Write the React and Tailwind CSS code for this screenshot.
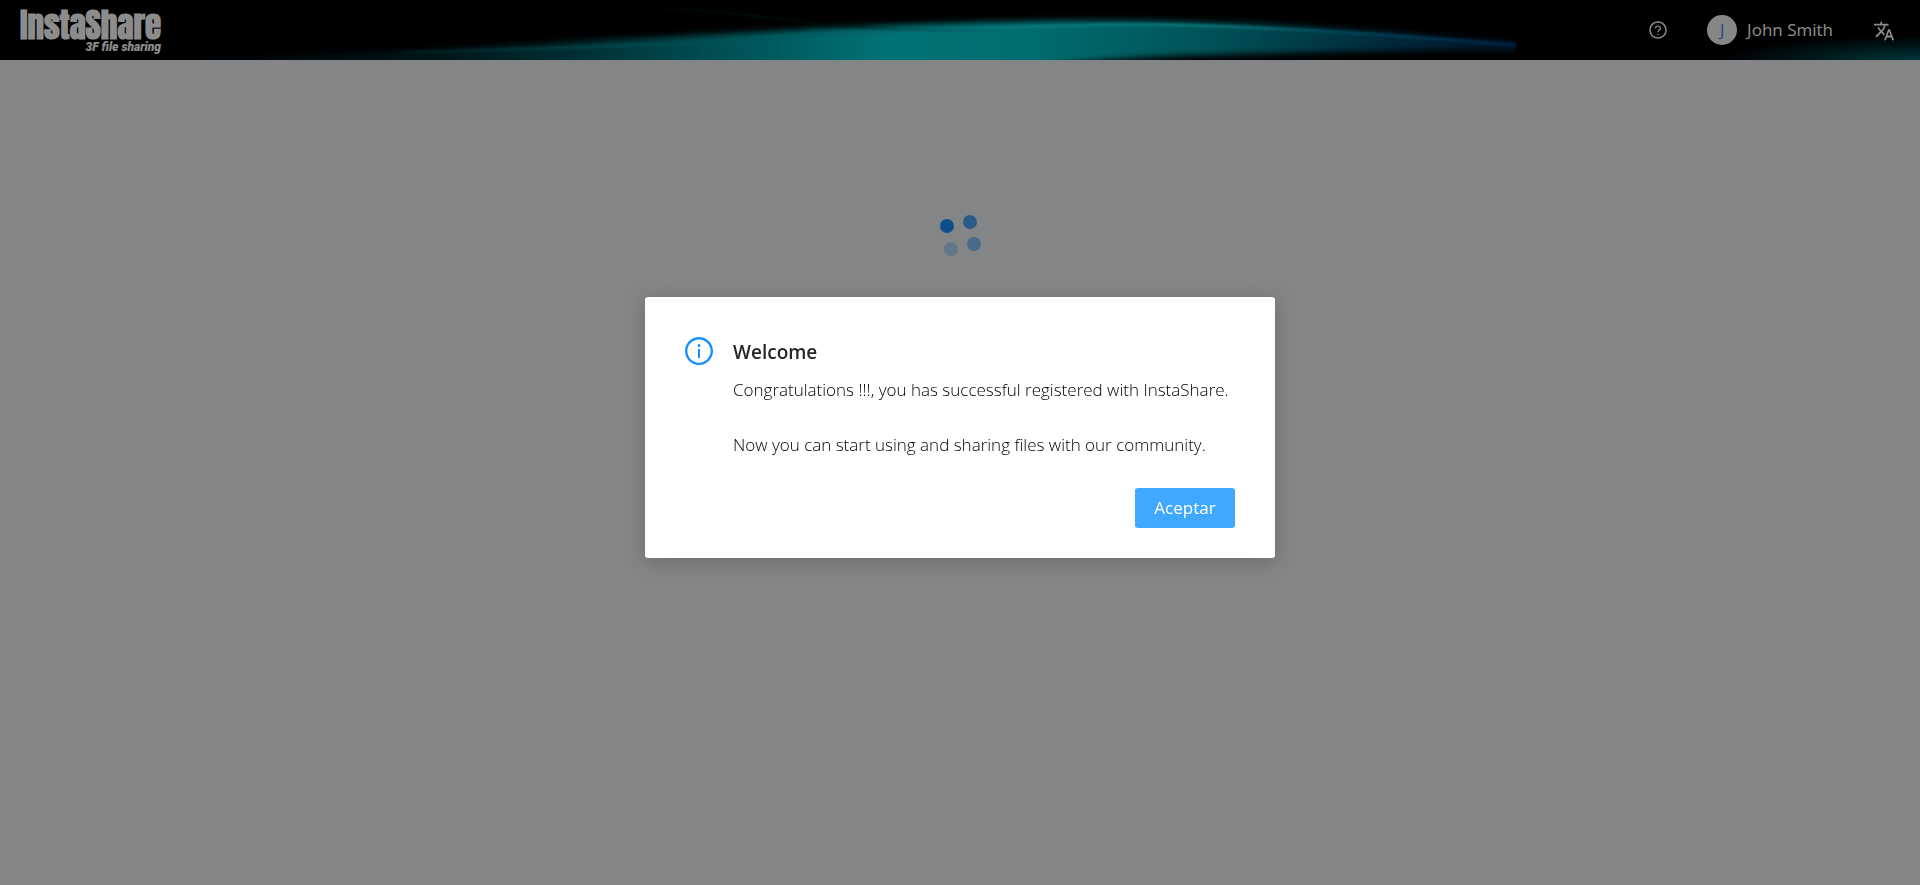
import React from 'react';
import { AiOutlineQuestionCircle, AiOutlineInfoCircle } from 'react-icons/ai';
import { MdTranslate } from 'react-icons/md';

function HeaderWaves() {
  return (
    <svg
      className="absolute inset-0 h-full w-full"
      viewBox="0 0 1920 60"
      preserveAspectRatio="none"
      aria-hidden="true"
    >
      <defs>
        <linearGradient id="beam" gradientUnits="userSpaceOnUse" x1="200" y1="0" x2="1520" y2="0">
          <stop offset="0" stopColor="#00262e" stopOpacity="0.3" />
          <stop offset="0.18" stopColor="#003a42" stopOpacity="0.7" />
          <stop offset="0.36" stopColor="#008088" />
          <stop offset="0.52" stopColor="#00d0d6" />
          <stop offset="0.62" stopColor="#00c8cc" />
          <stop offset="0.75" stopColor="#009ea4" />
          <stop offset="0.86" stopColor="#006078" />
          <stop offset="0.95" stopColor="#003458" />
          <stop offset="1" stopColor="#002a4c" />
        </linearGradient>
        <linearGradient id="edge" gradientUnits="userSpaceOnUse" x1="300" y1="0" x2="1520" y2="0">
          <stop offset="0" stopColor="#005a60" stopOpacity="0" />
          <stop offset="0.3" stopColor="#008a90" />
          <stop offset="0.6" stopColor="#10dce8" />
          <stop offset="0.75" stopColor="#10d0d4" />
          <stop offset="0.86" stopColor="#0080a0" />
          <stop offset="1" stopColor="#003c80" />
        </linearGradient>
        <linearGradient id="fold" gradientUnits="userSpaceOnUse" x1="600" y1="0" x2="1000" y2="0">
          <stop offset="0" stopColor="#001c20" stopOpacity="0" />
          <stop offset="0.4" stopColor="#001c20" />
          <stop offset="1" stopColor="#001c20" stopOpacity="0" />
        </linearGradient>
        <radialGradient id="corner">
          <stop offset="0" stopColor="#006068" />
          <stop offset="1" stopColor="#006068" stopOpacity="0" />
        </radialGradient>
        <filter id="soft" x="-5%" y="-40%" width="110%" height="180%">
          <feGaussianBlur stdDeviation="5 3" />
        </filter>
        <filter id="thin" x="-5%" y="-100%" width="110%" height="300%">
          <feGaussianBlur stdDeviation="4 1" />
        </filter>
        <clipPath id="tip">
          <rect x="0" y="0" width="1516" height="60" />
        </clipPath>
      </defs>
      <rect width="1920" height="60" fill="#000102" />
      <g clipPath="url(#tip)">
        <path
          d="M200 58C400 54 520 44 700 35C820 29 900 24 1000 22C1100 19 1200 21 1290 26C1380 31 1460 38 1530 44V50C1440 49 1340 52 1200 55C1100 58 1060 64 980 74H200Z"
          fill="url(#beam)"
          filter="url(#soft)"
        />
        <path
          d="M400 52C560 49 700 43 780 38C860 33 940 28 1100 25C1180 24 1240 27 1300 30C1380 34 1460 41 1530 46"
          fill="none"
          stroke="url(#edge)"
          strokeWidth="3"
          filter="url(#thin)"
        />
        <path
          d="M600 6C700 8 760 16 820 24C860 28 900 30 1000 31"
          fill="none"
          stroke="url(#fold)"
          strokeWidth="2"
          filter="url(#thin)"
        />
      </g>
      <ellipse cx="1920" cy="60" rx="200" ry="24" fill="url(#corner)" />
    </svg>
  );
}

function Header() {
  return (
    <header className="relative h-[60px] bg-black text-white">
      <HeaderWaves />
      <div className="relative flex h-full items-center justify-between pl-5 pr-[25px]">
        <a href="#home" className="flex flex-col items-end pt-1">
          <span className="font-['Impact','Anton',sans-serif] text-[33px] font-bold leading-[30px]">
            InstaShare
          </span>
          <span className="font-['Roboto',sans-serif] text-[12px] font-black italic leading-[14px]">
            3F file sharing
          </span>
        </a>
        <nav className="flex items-center">
          <button type="button" aria-label="Help" className="flex h-10 items-center">
            <AiOutlineQuestionCircle size={20} />
          </button>
          <button type="button" className="ml-[39px] flex items-center gap-2.5">
            <span className="flex h-[30px] w-[30px] items-center justify-center rounded-full bg-[#f4f4f4] text-base text-[#3f80e0]">
              J
            </span>
            <span className="text-[17px] leading-6">John Smith</span>
          </button>
          <button type="button" aria-label="Language" className="ml-10 flex h-10 items-center pt-0.5">
            <MdTranslate size={22} />
          </button>
        </nav>
      </div>
    </header>
  );
}

function Spinner() {
  return (
    <svg className="mx-auto mt-[150px] h-12 w-12" viewBox="0 0 48 48" role="status" aria-label="Loading">
      <circle cx="11" cy="16" r="7" fill="#1890ff" />
      <circle cx="34" cy="12" r="7" fill="#1890ff" fillOpacity="0.76" />
      <circle cx="38" cy="34" r="7" fill="#1890ff" fillOpacity="0.5" />
      <circle cx="15" cy="39" r="7" fill="#1890ff" fillOpacity="0.28" />
    </svg>
  );
}

function WelcomeDialog() {
  return (
    <div className="fixed inset-0 flex items-start justify-center bg-black/45 px-4 pt-[297px]">
      <section
        role="dialog"
        aria-modal="true"
        aria-labelledby="welcome-title"
        className="w-full max-w-[630px] rounded-[3px] bg-white pb-[30px] pl-[38px] pr-[38px] pt-[38px] text-[#262626] shadow-[0_4px_24px_rgba(0,0,0,0.2)]"
      >
        <div className="flex gap-[18px]">
          <AiOutlineInfoCircle size={32} className="shrink-0 text-[#1890ff]" aria-hidden="true" />
          <div className="min-w-0 pt-[3px]">
            <h2 id="welcome-title" className="text-[19px] font-semibold leading-7">
              Welcome
            </h2>
            <div className="mt-2.5 text-[17px] font-light leading-[27px] text-black">
              <p>Congratulations !!!, you has successful registered with InstaShare.</p>
              <p className="mt-7">Now you can start using and sharing files with our community.</p>
            </div>
          </div>
        </div>
        <div className="mt-[30px] flex justify-end pr-0.5">
          <button type="button" className="h-10 w-[100px] rounded-[3px] bg-[#40a9ff] text-[17px] text-white">
            Aceptar
          </button>
        </div>
      </section>
    </div>
  );
}

export default function App() {
  return (
    <div className="min-h-screen bg-[#f0f2f5] font-['Open_Sans','Noto_Sans',sans-serif]">
      <Header />
      <main>
        <Spinner />
      </main>
      <WelcomeDialog />
    </div>
  );
}
